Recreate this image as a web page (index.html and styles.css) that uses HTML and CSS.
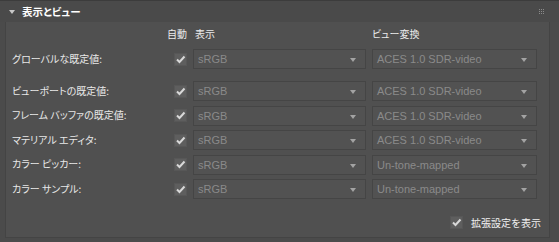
FILE: index.html
```html
<!DOCTYPE html>
<html lang="ja">
<head>
    <meta charset="UTF-8">
    <title>表示とビュー</title>
    <link rel="stylesheet" href="styles.css">
</head>
<body>

    <div class="rollout">
        <div class="rollout-head">
            <span class="arrow"></span>
            <span class="title">表示とビュー</span>
            <span class="grip">
                <i></i><i></i><i></i><i></i><i></i><i></i><i></i><i></i><i></i>
            </span>
        </div>

        <div class="rollout-body">
            <div class="row head-row">
                <span></span>
                <span class="col-head auto">自動</span>
                <span class="col-head disp">表示</span>
                <span class="col-head">ビュー変換</span>
            </div>

            <div class="row global">
                <span class="label">グローバルな既定値:</span>
                <span class="check"></span>
                <div class="combo">sRGB</div>
                <div class="combo">ACES 1.0 SDR-video</div>
            </div>

            <div class="rows">
                <div class="row">
                    <span class="label">ビューポートの既定値:</span>
                    <span class="check"></span>
                    <div class="combo">sRGB</div>
                    <div class="combo">ACES 1.0 SDR-video</div>
                </div>
                <div class="row">
                    <span class="label">フレーム バッファの既定値:</span>
                    <span class="check"></span>
                    <div class="combo">sRGB</div>
                    <div class="combo">ACES 1.0 SDR-video</div>
                </div>
                <div class="row">
                    <span class="label">マテリアル エディタ:</span>
                    <span class="check"></span>
                    <div class="combo">sRGB</div>
                    <div class="combo">ACES 1.0 SDR-video</div>
                </div>
                <div class="row">
                    <span class="label">カラー ピッカー:</span>
                    <span class="check"></span>
                    <div class="combo">sRGB</div>
                    <div class="combo">Un-tone-mapped</div>
                </div>
                <div class="row">
                    <span class="label">カラー サンプル:</span>
                    <span class="check"></span>
                    <div class="combo">sRGB</div>
                    <div class="combo">Un-tone-mapped</div>
                </div>
            </div>

            <div class="advanced">
                <span class="check"></span>
                <span class="adv-label">拡張設定を表示</span>
            </div>
        </div>
    </div>

</body>
</html>
```

FILE: styles.css
```css
/* Общие стили */
body {
    margin: 0;
    background: #4b4b4b;
    font-family: "Noto Sans CJK JP", "Liberation Sans", sans-serif;
    font-size: 10px;
    color: #e6e6e6;
    overflow: hidden;
}

.rollout {
    width: 559px;
    height: 242px;
    box-sizing: border-box;
}

/* Заголовок */
.rollout-head {
    height: 22px;
    display: flex;
    align-items: center;
    padding: 0 8px 0 9px;
    background: #4a4a4a;
    border-top: 1px solid #3c3c3c;
    box-sizing: border-box;
}

.arrow {
    width: 0;
    height: 0;
    border-left: 3px solid transparent;
    border-right: 3px solid transparent;
    border-top: 4px solid #c8c8c8;
    margin-right: 7px;
}

.title {
    font-weight: bold;
    font-size: 10.5px;
    color: #ffffff;
    font-feature-settings: "palt";
    flex: 1;
}

.grip {
    display: grid;
    grid-template-columns: repeat(3, 1px);
    gap: 1px;
    margin-right: 7px;
    margin-top: -1px;
}

.grip i {
    width: 1px;
    height: 1px;
    background: #8a8a8a;
}

/* Тело */
.rollout-body {
    margin: 0 9px 4px 5px;
    height: 216px;
    background: #505050;
    border-left: 1px solid #444;
    border-right: 1px solid #444;
    border-bottom: 1px solid #444;
    box-sizing: border-box;
    padding: 5px 0 0 6px;
}

.row {
    display: grid;
    grid-template-columns: 156px 13px 173px 165px;
    height: 20px;
    column-gap: 6px;
    align-items: center;
}

.head-row {
    height: 14px;
    margin-bottom: 8px;
}

.global {
    margin-bottom: 12px;
}

.rows {
    display: flex;
    flex-direction: column;
    gap: 4.6px;
}

.col-head {
    font-feature-settings: "palt";
    color: #ececec;
    line-height: 14px;
}

.auto {
    margin-left: -7px;
    white-space: nowrap;
}

.disp {
    padding-left: 2px;
}

.label {
    font-feature-settings: "palt";
    white-space: nowrap;
    color: #e8e8e8;
    position: relative;
    top: -1px;
}

.check {
    width: 13px;
    height: 13px;
    box-sizing: border-box;
    background: #5e5e5e url("data:image/svg+xml,%3Csvg xmlns='http://www.w3.org/2000/svg' width='13' height='13'%3E%3Cpath d='M3 6.5 L5.5 9 L10.5 3.5' fill='none' stroke='%23d8d8d8' stroke-width='2'/%3E%3C/svg%3E") no-repeat center;
    border: 1px solid #575757;
}

.combo {
    height: 20px;
    box-sizing: border-box;
    border: 1px solid #454545;
    background: #525252;
    color: #8a8a8a;
    font-family: "Liberation Sans", sans-serif;
    font-size: 11px;
    line-height: 18px;
    padding-left: 4px;
    position: relative;
}

.combo::after {
    content: "";
    position: absolute;
    right: 9px;
    top: 8px;
    border-left: 3px solid transparent;
    border-right: 3px solid transparent;
    border-top: 4px solid #a3a3a3;
}

/* Нижний флажок */
.advanced {
    display: flex;
    align-items: center;
    justify-content: flex-end;
    gap: 8px;
    margin-top: 16px;
    padding-right: 8px;
}

.adv-label {
    font-size: 10px;
    color: #f0f0f0;
}
```
